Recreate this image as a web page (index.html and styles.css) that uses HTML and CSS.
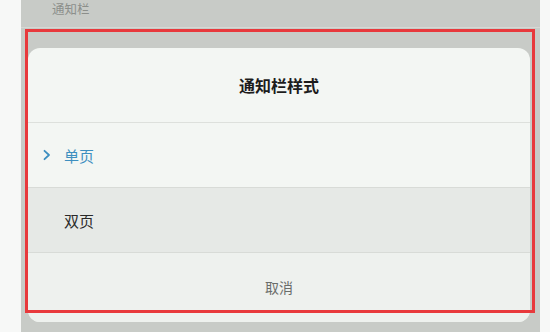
FILE: index.html
```html
<!doctype html>
<html>
<head>
    <title>通知栏样式</title>
    <link rel="stylesheet" href="styles.css">
</head>
<body>
    <div class="screen">
        <div class="section-label">通知栏</div>
        <div class="sheet">
            <div class="sheet-title">通知栏样式</div>
            <div class="option selected">
                <svg class="check" width="10" height="12" viewBox="0 0 10 12">
                    <path d="M2.5 1.8 L7 6 L2.5 10.2" fill="none" stroke="#3d8fc0" stroke-width="1.8" stroke-linecap="round" stroke-linejoin="round"/>
                </svg>
                <span>单页</span>
            </div>
            <div class="option pressed">
                <span>双页</span>
            </div>
            <div class="cancel">取消</div>
        </div>
        <!-- Highlight frame drawn over the screenshot. -->
        <div class="highlight"></div>
    </div>
</body>
</html>
```

FILE: styles.css
```css
body {
    margin: 0;
    width: 550px;
    height: 332px;
    overflow: hidden;
    background-color: #f7f8f7;
    font-family: "Noto Sans CJK SC", "Noto Sans", sans-serif;
}
.screen {
    position: relative;
    width: 519px;
    height: 332px;
    margin-left: 21px;
    background-color: #c8cbc7;
    display: flex;
    flex-direction: column;
}
.section-label {
    height: 27px;
    padding-left: 31px;
    font-size: 12.5px;
    line-height: 17px;
    color: #8c8f8b;
    border-bottom: 1px solid #d6d8d4;
}
.sheet {
    margin: 20px 10px 0 7px;
    height: 274px;
    border-radius: 12px;
    overflow: hidden;
    background-color: #f3f6f3;
    display: flex;
    flex-direction: column;
}
.sheet-title {
    height: 74px;
    display: flex;
    align-items: center;
    justify-content: center;
    font-size: 16px;
    font-weight: bold;
    color: #1c1c1c;
    border-bottom: 1px solid #dde0dc;
}
.option {
    height: 64px;
    display: flex;
    align-items: center;
    padding-left: 36px;
    font-size: 15px;
    color: #2a2a2a;
    border-bottom: 1px solid #d8dbd7;
}
.option.selected {
    color: #3d8fc0;
}
.option.pressed {
    background-color: #e6e9e6;
}
.check {
    margin-left: -22px;
    margin-right: 12px;
}
.cancel {
    flex: 1;
    display: flex;
    align-items: center;
    justify-content: center;
    padding-bottom: 2px;
    font-size: 14px;
    color: #6a6d6a;
    background-color: #eef1ee;
}
.highlight {
    position: absolute;
    left: 4px;
    top: 29px;
    width: 504px;
    height: 278px;
    border: 3px solid #e8393c;
}
```
